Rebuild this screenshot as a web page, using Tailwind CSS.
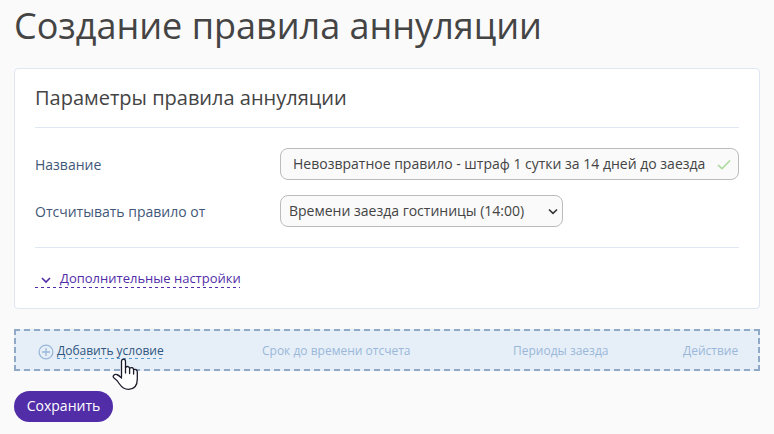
<!DOCTYPE html>
<html lang="ru">

<head>
  <meta charset="UTF-8">
  <meta name="viewport" content="width=device-width, initial-scale=1.0">
  <script src="https://cdn.jsdelivr.net/npm/@tailwindcss/browser@4"></script>
  <title>Создание правила аннуляции</title>
</head>

<body class="h-screen overflow-hidden bg-[#fafafa] font-['Open_Sans','Noto_Sans',sans-serif] text-[#444]">

  <div class="w-[760px] pl-3.5">
    <h1 class="h-[68px] pt-[1px] text-4xl leading-[50px] whitespace-nowrap">Создание правила аннуляции</h1>

    <div class="h-[241px] rounded border border-[#dfe7f2] bg-white px-5">
      <h2 class="h-[59px] border-b border-[#dfe7f2] pt-[15px] text-xl leading-7">Параметры правила аннуляции</h2>

      <div class="mt-5 flex h-8 items-center">
        <label for="name" class="w-[245px] pt-0.5 text-sm text-[#3f5878]">Название</label>
        <div class="flex h-8 flex-1 items-center justify-between rounded-lg border border-[#bbb] bg-[#fafafa] pr-[7px] pl-3">
          <span id="name" class="text-sm whitespace-nowrap">Невозвратное правило - штраф 1 сутки за 14 дней до заезда</span>
          <svg class="mt-0.5 h-3 w-3.5" viewBox="0 0 14 12" fill="none" stroke="#a9d99a" stroke-width="1.6">
            <path d="M1 6 L5 9.7 L13 1.5" />
          </svg>
        </div>
      </div>

      <div class="mt-[15px] flex h-8 items-center">
        <label for="from" class="w-[245px] pt-0.5 text-sm text-[#3f5878]">Отсчитывать правило от</label>
        <div class="flex h-8 w-[283px] items-center justify-between rounded-lg border border-[#bbb] bg-[#fafafa] pr-[4px] pl-2">
          <span id="from" class="text-sm whitespace-nowrap">Времени заезда гостиницы (14:00)</span>
          <svg class="h-2.5 w-2.5" viewBox="0 0 10 10" fill="none" stroke="#333" stroke-width="1.6">
            <path d="M1 3.5 L5 7.3 L9 3.5" />
          </svg>
        </div>
      </div>

      <div class="mt-5 border-t border-[#dfe7f2] pt-5">
        <a href="#" class="flex h-[19px] items-center text-[13px] text-[#522da8]">
          <svg class="mt-1 mr-[9px] ml-1.5 h-2.5 w-2.5" viewBox="0 0 10 10" fill="none" stroke="currentColor" stroke-width="1.6">
            <path d="M1 3 L5 7 L9 3" />
          </svg>
          <span class="pt-0.5 whitespace-nowrap">Дополнительные настройки</span>
        </a>
        <div class="h-px w-[205px] bg-[repeating-linear-gradient(90deg,#522da8_0_3px,transparent_3px_6px)]"></div>
      </div>
    </div>

    <!-- condition table header -->
    <div class="relative mt-5 flex h-[42px] items-center border-2 border-dashed border-[#8fa9c6] bg-[#e6eff7] text-xs text-[#9ab7da]">
      <svg class="mt-[3px] ml-[22px] h-4 w-4" viewBox="0 0 16 16" fill="none" stroke="#9ab7da" stroke-width="1.3">
        <circle cx="8" cy="8" r="6.9" />
        <path d="M4 8 H12 M8 4 V12" />
      </svg>
      <div class="ml-[3px] w-[205px] pt-px">
        <a href="#" class="block w-[106px] text-[#2d5580]">
          <span class="block h-4 leading-[17px] whitespace-nowrap">Добавить условие</span>
          <span class="block h-px bg-[repeating-linear-gradient(90deg,#5b9bd0_0_3px,transparent_3px_6px)]"></span>
        </a>
      </div>
      <span class="w-[251px] pt-0.5">Срок до времени отсчета</span>
      <span class="w-[170px] pt-0.5">Периоды заезда</span>
      <span class="pt-0.5">Действие</span>

      <!-- hand cursor -->
      <svg class="absolute top-[27px] left-[96px] h-[33px] w-[27px]" viewBox="0 0 27 33" fill="white" stroke="#1a1a2a" stroke-width="1.3" stroke-linejoin="round" stroke-linecap="round">
        <path d="M9.5 19 V3.5 C9.5 .2 13.5 .2 13.5 3.5 V9.5 C15 7.8 17.3 8.4 17.6 10.3 C19.2 9 21.3 9.5 21.6 11.6 C23.3 10.8 25.3 11.6 25.3 14 V21 C25.3 27.5 22 31.3 16.5 31.3 C12 31.3 9.5 29 7.5 26 C6 23.7 4 21.3 1.8 19.8 C.2 18.3 2.2 15.8 4.6 16.5 C6.6 17 8 18.5 9.5 20" />
        <path d="M13.5 9.5 V15 M17.6 10.3 V15.5 M21.6 11.6 V16" />
      </svg>
    </div>

    <button class="mt-5 h-[31px] w-[99px] rounded-full bg-[#522da8] pb-0.5 text-sm text-white">Сохранить</button>
  </div>

</body>

</html>
